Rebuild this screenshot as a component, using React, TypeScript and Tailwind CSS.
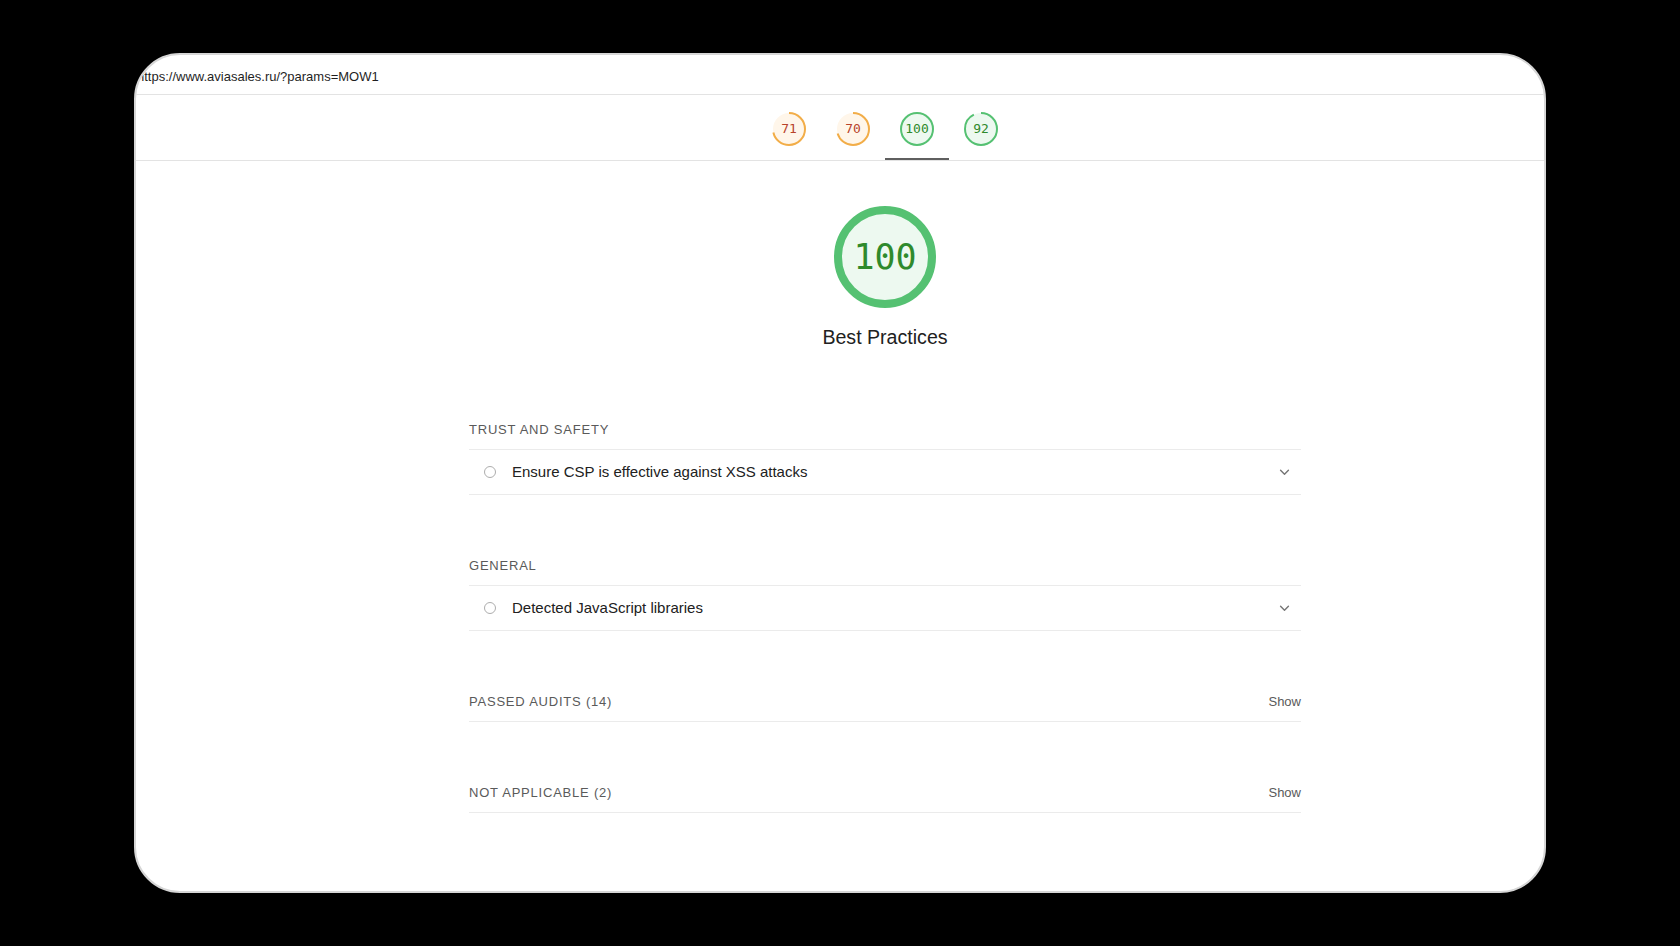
import React from 'react';

type Tone = 'avg' | 'pass';

const tones: Record<Tone, { arc: string; fill: string; text: string }> = {
  avg: { arc: '#f2ad48', fill: '#fff6ea', text: '#b8432a' },
  pass: { arc: '#55c172', fill: '#edf9f0', text: '#2f8a2c' },
};

const Gauge: React.FC<{ score: number; size: number; stroke: number; tone: Tone; textClass: string }> = ({
  score,
  size,
  stroke,
  tone,
  textClass,
}) => {
  const t = tones[tone];
  const r = (size - stroke) / 2;
  const c = 2 * Math.PI * r;
  return (
    <div className="relative flex items-center justify-center" style={{ width: size, height: size }}>
      <svg width={size} height={size} className="absolute inset-0 -rotate-90">
        <circle cx={size / 2} cy={size / 2} r={r} fill={t.fill} stroke="none" />
        <circle
          cx={size / 2}
          cy={size / 2}
          r={r}
          fill="none"
          stroke={t.arc}
          strokeWidth={stroke}
          strokeDasharray={`${(c * score) / 100} ${c}`}
        />
      </svg>
      <span className={`relative font-['DejaVu_Sans_Mono',monospace] ${textClass}`} style={{ color: t.text }}>
        {score}
      </span>
    </div>
  );
};

const Chevron = () => (
  <svg width="11" height="7" viewBox="0 0 12 8" fill="none">
    <path d="M1.5 1.5 6 6l4.5-4.5" stroke="#757575" strokeWidth="1.6" strokeLinecap="round" strokeLinejoin="round" />
  </svg>
);

const GroupLabel: React.FC<{ title: string; show?: boolean }> = ({ title, show }) => (
  <div className="h-[40px] flex items-center justify-between border-b border-[#ebebeb]">
    <span className="text-[13px] tracking-[0.06em] text-[#5a5a5a]">{title}</span>
    {show && <span className="text-[13px] text-[#5a5a5a]">Show</span>}
  </div>
);

const AuditRow: React.FC<{ title: string }> = ({ title }) => (
  <div className="h-[45px] flex items-center border-b border-[#ebebeb] pl-[15px] pr-[11px]">
    <span className="w-[12px] h-[12px] rounded-full border-[1.5px] border-[#adadad] shrink-0" />
    <span className="ml-[16px] text-[15px] text-[#212121] flex-1">{title}</span>
    <Chevron />
  </div>
);

export default function App() {
  const tabs: { score: number; tone: Tone; active?: boolean }[] = [
    { score: 71, tone: 'avg' },
    { score: 70, tone: 'avg' },
    { score: 100, tone: 'pass', active: true },
    { score: 92, tone: 'pass' },
  ];

  return (
    <div className="w-[1680px] h-[946px] bg-black overflow-hidden font-['Liberation_Sans',Arial,sans-serif]">
      <div className="ml-[134px] mt-[53px] w-[1412px] h-[840px] bg-white rounded-[46px] border-2 border-[#d6d6d6] overflow-hidden flex flex-col">
        {/* url bar */}
        <div className="h-[40px] shrink-0 flex items-center pt-[5px] border-b border-[#e3e3e3]">
          <span className="ml-[1px] text-[13px] text-[#1f1f1f] whitespace-nowrap">
            https://www.aviasales.ru/?params=MOW1
          </span>
        </div>

        {/* category tabs */}
        <div className="h-[66px] shrink-0 border-b border-[#e3e3e3] flex justify-center pl-[90px]">
          {tabs.map((tab) => (
            <div key={tab.score} className="w-[64px] flex flex-col items-center justify-end">
              <Gauge score={tab.score} size={34} stroke={2} tone={tab.tone} textClass="text-[13px]" />
              <div className={`mt-[12px] h-[2px] w-full ${tab.active ? 'bg-[#5f5f5f]' : 'bg-transparent'}`} />
            </div>
          ))}
        </div>

        {/* main */}
        <div className="pl-[333px]">
          <div className="w-[832px] flex flex-col">
            <div className="flex flex-col items-center pt-[45px]">
              <Gauge score={100} size={102} stroke={8} tone="pass" textClass="text-[35px] leading-none" />
              <div className="mt-[15px] text-[19.6px] leading-[28px] text-[#212121]">Best Practices</div>
            </div>

            <div className="mt-[59px]">
              <GroupLabel title="TRUST AND SAFETY" />
              <AuditRow title="Ensure CSP is effective against XSS attacks" />
            </div>

            <div className="mt-[51px]">
              <GroupLabel title="GENERAL" />
              <AuditRow title="Detected JavaScript libraries" />
            </div>

            <div className="mt-[51px]">
              <GroupLabel title="PASSED AUDITS (14)" show />
            </div>

            <div className="mt-[51px]">
              <GroupLabel title="NOT APPLICABLE (2)" show />
            </div>
          </div>
        </div>
      </div>
    </div>
  );
}
